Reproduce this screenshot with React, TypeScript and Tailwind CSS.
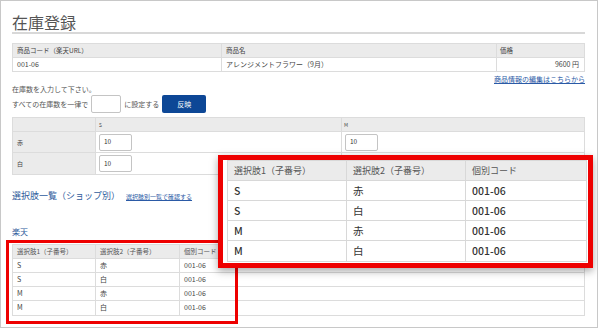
const font = "font-['Noto_Sans_CJK_JP','Noto_Sans',sans-serif]"

const options = [
  { a: 'S', b: '赤', code: '001-06' },
  { a: 'S', b: '白', code: '001-06' },
  { a: 'M', b: '赤', code: '001-06' },
  { a: 'M', b: '白', code: '001-06' },
]

function ProductTable() {
  return (
    <div className="mt-[9px] w-[573px] border border-[#dcdcdc] text-[#444]">
      <div className="grid h-[14px] grid-cols-[209px_275px_1fr] border-b border-[#dcdcdc] bg-[#ebebeb] text-[6.5px] leading-[13px]">
        <div className="border-r border-[#dcdcdc] pl-[4px]">商品コード（楽天URL）</div>
        <div className="border-r border-[#dcdcdc] pl-[4px]">商品名</div>
        <div className="pl-[3px]">価格</div>
      </div>
      <div className="grid h-[13px] grid-cols-[209px_275px_1fr] text-[7px] leading-[13px]">
        <div className="border-r border-[#dcdcdc] pl-[4px]">001-06</div>
        <div className="border-r border-[#dcdcdc] pl-[4px]">アレンジメントフラワー（9月）</div>
        <div className="pr-[5px] text-right">9600 円</div>
      </div>
    </div>
  )
}

function StockTable() {
  const rows = ['赤', '白']
  return (
    <div className="mt-[4px] w-[573px] border border-[#dcdcdc] text-[#444]">
      <div className="grid h-[14px] grid-cols-[83px_246px_1fr] border-b border-[#dcdcdc] bg-[#ebebeb] text-[5px] leading-[13px]">
        <div className="border-r border-[#dcdcdc]" />
        <div className="border-r border-[#dcdcdc] pl-[3px]">S</div>
        <div className="pl-[2px]">M</div>
      </div>
      {rows.map((label, i) => (
        <div
          key={label}
          className={`grid h-[21px] grid-cols-[83px_246px_1fr] ${i === 0 ? 'border-b border-[#dcdcdc]' : ''}`}
        >
          <div className="flex items-center border-r border-[#dcdcdc] bg-[#ebebeb] pl-[4px] text-[6px]">{label}</div>
          <div className="flex items-center border-r border-[#dcdcdc] pl-[3px]">
            <div className="flex h-[17px] w-[33px] items-center rounded-[2px] border border-[#c4c4c4] bg-white pl-[4px] text-[6.5px] text-[#333]">
              10
            </div>
          </div>
          <div className="flex items-center pl-[3px]">
            <div className="flex h-[17px] w-[33px] items-center rounded-[2px] border border-[#c4c4c4] bg-white pl-[4px] text-[6.5px] text-[#333]">
              10
            </div>
          </div>
        </div>
      ))}
    </div>
  )
}

function OptionTable() {
  return (
    <div className="mt-[7px] w-[573px] border border-[#dcdcdc] text-[#444]">
      <div className="grid h-[14px] grid-cols-[83px_84px_1fr] border-b border-[#dcdcdc] bg-[#ebebeb] text-[6.5px] leading-[13px] text-[#555]">
        <div className="border-r border-[#dcdcdc] pl-[4px]">選択肢1（子番号）</div>
        <div className="border-r border-[#dcdcdc] pl-[4px]">選択肢2（子番号）</div>
        <div className="pl-[4px]">個別コード</div>
      </div>
      {options.map((o, i) => (
        <div
          key={i}
          className={`grid h-[14px] grid-cols-[83px_84px_1fr] text-[7px] leading-[13px] ${i < 3 ? 'border-b border-[#dcdcdc]' : ''}`}
        >
          <div className="border-r border-[#dcdcdc] pl-[4px]">{o.a}</div>
          <div className="border-r border-[#dcdcdc] pl-[4px]">{o.b}</div>
          <div className="pl-[4px]">{o.code}</div>
        </div>
      ))}
    </div>
  )
}

function ZoomCallout() {
  return (
    <div className="absolute left-[217px] top-[154px] h-[113px] w-[375px] border-[5px] border-[#ee0000] bg-white pb-[1px] pl-[4px] pr-[1px] shadow-[0_3px_8px_rgba(0,0,0,0.35)]">
      <div className="border border-[#d8d8d8] text-[#333]">
        <div className="grid h-[20px] grid-cols-[119px_119px_1fr] border-b border-[#d8d8d8] bg-[#ebebeb] text-[9px] leading-[19px] text-[#555]">
          <div className="border-r border-[#d8d8d8] pl-[6px]">選択肢1（子番号）</div>
          <div className="border-r border-[#d8d8d8] pl-[6px]">選択肢2（子番号）</div>
          <div className="pl-[6px]">個別コード</div>
        </div>
        {options.map((o, i) => (
          <div
            key={i}
            className={`grid h-[20px] grid-cols-[119px_119px_1fr] text-[10.5px] font-medium leading-[19px] ${i < 3 ? 'border-b border-[#d8d8d8]' : ''}`}
          >
            <div className="border-r border-[#d8d8d8] pl-[6px]">{o.a}</div>
            <div className="border-r border-[#d8d8d8] pl-[6px] font-normal">{o.b}</div>
            <div className="pl-[6px]">{o.code}</div>
          </div>
        ))}
      </div>
    </div>
  )
}

export default function App() {
  return (
    <div className={`${font} h-[329px] w-[600px] bg-white`}>
      <div className="relative h-[328px] w-[598px] overflow-hidden border border-[#c8c8c8] pl-[11px] pt-[11px]">
        {/* Title */}
        <div className="w-[573px] border-b-2 border-[#d8d8d8] text-[16px] leading-[20px] text-[#555]">在庫登録</div>

        <ProductTable />

        <div className="mt-[2px] w-[573px] text-right text-[7px] leading-[10px] text-[#2b5aa6] underline">
          商品情報の編集はこちらから
        </div>

        <div className="text-[7px] leading-[10px] text-[#555]">在庫数を入力して下さい。</div>

        <div className="mt-[1px] flex h-[18px] items-center text-[7px] text-[#555]">
          <span>すべての在庫数を一律で</span>
          <div className="ml-[3px] h-[18px] w-[30px] rounded-[2px] border border-[#c4c4c4] bg-white" />
          <span className="ml-[3px]">に設定する</span>
          <div className="ml-[3px] flex h-[18px] w-[44px] items-center justify-center rounded-[2px] bg-[#0d4796] text-[7px] text-white">
            反映
          </div>
        </div>

        <StockTable />

        <div className="mt-[14px] flex h-[13px] items-baseline gap-[6px] leading-[13px]">
          <span className="text-[9px] text-[#2f5c9c]">選択肢一覧（ショップ別）</span>
          <span className="text-[6px] text-[#2b5aa6] underline">選択肢別一覧で確認する</span>
        </div>

        <div className="mt-[24px] text-[8px] leading-[11px] text-[#2f5c9c]">楽天</div>

        <OptionTable />

        {/* red highlight around the small table */}
        <div className="absolute left-[5px] top-[239px] h-[84px] w-[232px] border-[3px] border-[#ee0000]" />

        <ZoomCallout />
      </div>
    </div>
  )
}
